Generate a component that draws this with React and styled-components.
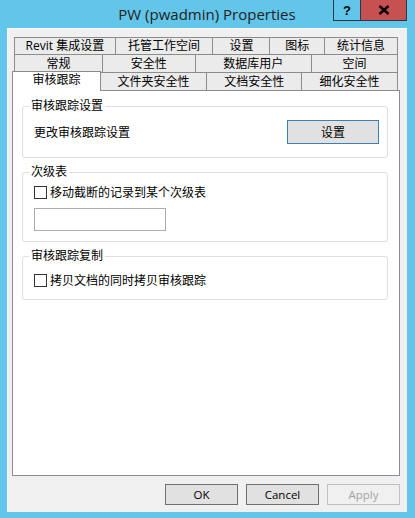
import React from "react";
import styled, { createGlobalStyle } from "styled-components";

const Global = createGlobalStyle`
  html, body {
    margin: 0;
    padding: 0;
    background: #62c6ea;
  }
  body {
    font-family: "Open Sans", "Noto Sans CJK SC", sans-serif;
    font-size: 12px;
    color: #000;
  }
`;

const Window = styled.div`
  width: 415px;
  height: 518px;
  box-sizing: border-box;
  padding: 0 8px 6px 7px;
  background: #62c6ea;
  display: flex;
  flex-direction: column;
`;

const TitleBar = styled.div`
  position: relative;
  height: 28px;
  flex: none;
  display: flex;
  align-items: center;
  justify-content: center;
`;

const Title = styled.div`
  font-family: "Open Sans", sans-serif;
  font-size: 15px;
  color: #222;
  margin-top: -1px;
`;

const Caption = styled.div`
  position: absolute;
  top: 0;
  right: 0;
  display: flex;
`;

const CapButton = styled.div`
  box-sizing: border-box;
  width: ${(p) => p.w}px;
  height: 21px;
  border: 1px solid #2b3a42;
  border-top: none;
  background: ${(p) => (p.red ? "#c75050" : "#62c6ea")};
  display: flex;
  align-items: center;
  justify-content: center;
  font-family: "Liberation Sans", sans-serif;
  font-weight: bold;
  font-size: 13px;
  & + & {
    border-left: none;
  }
`;

const Client = styled.div`
  flex: 1;
  background: #f0f0f0;
  box-shadow: inset 1px 1px 0 #fbfbfb;
  display: flex;
  flex-direction: column;
  padding: 9px 7px 7px 5px;
  min-height: 0;
`;

const TabStrip = styled.div`
  margin: 0 2px;
  display: flex;
  flex-direction: column;
`;

const TabRow = styled.div`
  display: flex;
  align-items: flex-start;
  height: ${(p) => p.h}px;
`;

const Tab = styled.div`
  box-sizing: border-box;
  width: ${(p) => p.w + (p.active ? 2 : 0)}px;
  height: ${(p) => (p.active ? "calc(100% + 2px)" : "100%")};
  margin-top: ${(p) => (p.active ? -1 : 0)}px;
  margin-left: ${(p) => (p.active ? -2 : 0)}px;
  border: 1px solid #8c8c8c;
  border-bottom: none;
  background: ${(p) => (p.active ? "#fff" : "#ebebeb")};
  position: relative;
  z-index: ${(p) => (p.active ? 2 : 1)};
  display: flex;
  align-items: ${(p) => (p.active ? "flex-start" : "center")};
  justify-content: center;
  line-height: 16px;
  white-space: nowrap;
  & + & {
    margin-left: -1px;
  }
`;

const Panel = styled.div`
  flex: 1;
  background: #fff;
  border: 1px solid #898c95;
  padding: 8px 11px 0 9px;
  display: flex;
  flex-direction: column;
  gap: ${(p) => p.gap}px;
`;

const Group = styled.fieldset`
  margin: 0;
  border: 1px solid #dcdfe3;
  border-radius: 3px;
  padding: ${(p) => p.pt}px 8px ${(p) => p.pb}px 11px;
  min-width: 0;
`;

const Legend = styled.legend`
  font-size: 12px;
  line-height: 14px;
  padding: 0 2px;
  margin-left: -5px;
`;

const SettingRow = styled.div`
  display: flex;
  align-items: center;
  justify-content: space-between;
`;

const Button = styled.div`
  box-sizing: border-box;
  width: ${(p) => p.w}px;
  height: ${(p) => p.h}px;
  display: flex;
  align-items: center;
  justify-content: center;
  background: ${(p) => (p.disabled ? "#f0f0f0" : "#e1e1e1")};
  border: 1px solid
    ${(p) => (p.primary ? "#3c7fb1" : p.disabled ? "#c0c0c0" : "#707070")};
  color: ${(p) => (p.disabled ? "#a3a3a3" : "#000")};
  font-size: ${(p) => (p.latin ? 11.5 : 12)}px;
`;

const CheckRow = styled.label`
  display: flex;
  align-items: center;
  height: 14px;
  gap: 3px;
`;

const Box = styled.span`
  box-sizing: border-box;
  width: 13px;
  height: 13px;
  border: 1px solid #333;
  background: #fff;
  flex: none;
`;

const TextBox = styled.div`
  box-sizing: border-box;
  width: 132px;
  height: 23px;
  margin-top: 9px;
  border: 1px solid #acacac;
  background: #fff;
`;

const Footer = styled.div`
  display: flex;
  justify-content: flex-end;
  gap: 8px;
  margin-top: 8px;
  flex: none;
`;

const rows = [
  { h: 17, tabs: [["Revit 集成设置", 102], ["托管工作空间", 99], ["设置", 58], ["图标", 56], ["统计信息", 74]] },
  { h: 18, tabs: [["常规", 89], ["安全性", 94], ["数据库用户", 118], ["空间", 87]] },
  { h: 18, tabs: [["审核跟踪", 87, true], ["文件夹安全性", 108], ["文档安全性", 96], ["细化安全性", 97]] },
];

export default function App() {
  return (
    <>
      <Global />
      <Window>
        <TitleBar>
          <Title>PW (pwadmin) Properties</Title>
          <Caption>
            <CapButton w={28}>?</CapButton>
            <CapButton w={46} red>
              <svg width="12" height="10" viewBox="0 0 12 10">
                <path d="M1.5 1 L10.5 9 M10.5 1 L1.5 9" stroke="#000" strokeWidth="2.4" />
              </svg>
            </CapButton>
          </Caption>
        </TitleBar>
        <Client>
          <TabStrip>
            {rows.map((r, i) => (
              <TabRow key={i} h={r.h}>
                {r.tabs.map(([label, w, active]) => (
                  <Tab key={label} w={w} active={active}>
                    {label}
                  </Tab>
                ))}
              </TabRow>
            ))}
          </TabStrip>
          <Panel gap={7}>
            <Group pt={7} pb={13}>
              <Legend>审核跟踪设置</Legend>
              <SettingRow>
                <span>更改审核跟踪设置</span>
                <Button w={92} h={24} primary>
                  设置
                </Button>
              </SettingRow>
            </Group>
            <Group pt={6} pb={10}>
              <Legend>次级表</Legend>
              <CheckRow>
                <Box />
                移动截断的记录到某个次级表
              </CheckRow>
              <TextBox />
            </Group>
            <Group pt={10} pb={12}>
              <Legend>审核跟踪复制</Legend>
              <CheckRow>
                <Box />
                拷贝文档的同时拷贝审核跟踪
              </CheckRow>
            </Group>
          </Panel>
          <Footer>
            <Button w={73} h={21} latin>
              OK
            </Button>
            <Button w={73} h={21} latin>
              Cancel
            </Button>
            <Button w={73} h={21} latin disabled>
              Apply
            </Button>
          </Footer>
        </Client>
      </Window>
    </>
  );
}
